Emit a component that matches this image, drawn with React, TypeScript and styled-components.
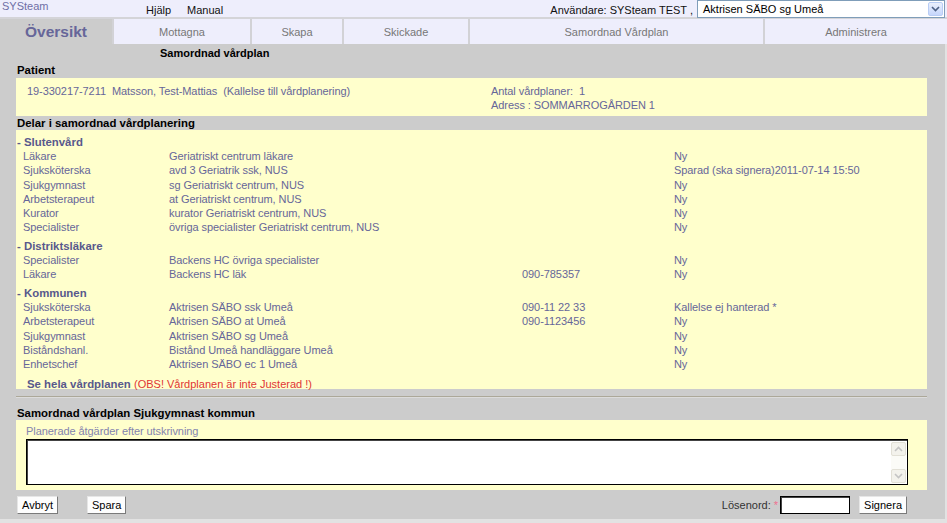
import React from 'react';
import styled, { createGlobalStyle } from 'styled-components';

// Layout colours
// Lavender (#EEEEFC) - top bar and tabs
// Silver (#CCCCCC) - page body
// Cream (#FFFFCC) - boxes
// Slate (#666699) - body text

const GlobalStyle = createGlobalStyle`
  body {
    margin: 0;
    background: #e2e2e2;
    font-family: "Liberation Sans", Arial, sans-serif;
    font-size: 11px;
  }
`;

const TopBar = styled.header`
  display: flex;
  align-items: center;
  height: 17px;
  background: #eeeefc;
  border-bottom: 2px solid #d4d4d8;
`;

const Brand = styled.div`
  align-self: flex-start;
  width: 144px;
  padding-left: 2px;
  line-height: 13px;
  color: #6f6fa6;
  font-size: 11px;
`;

const MenuLink = styled.span`
  color: #111;
  margin-right: 16px;
  padding-top: 2px;
`;

const Spacer = styled.div`
  flex: 1;
`;

const UserLabel = styled.span`
  color: #111;
  margin-right: 4px;
  padding-top: 2px;
`;

const Select = styled.div`
  display: flex;
  align-items: center;
  box-sizing: border-box;
  width: 248px;
  height: 18px;
  margin-top: 1px;
  margin-right: 2px;
  background: #fff;
  border: 1px solid #7f9db9;
  font-size: 11px;
  color: #000;
`;

const SelectText = styled.span`
  flex: 1;
  padding-left: 5px;
`;

const SelectButton = styled.span`
  display: flex;
  align-items: center;
  justify-content: center;
  width: 15px;
  height: 14px;
  margin-right: 1px;
  border: 1px solid #b9cdf5;
  border-radius: 2px;
  box-sizing: border-box;
  background: linear-gradient(#eaf0fd, #c6d6fb);
`;

const TabRow = styled.nav`
  display: flex;
  height: 25px;
  gap: 2px;
  background: #d2d2d6;
`;

const Tab = styled.div<{ $w?: number; $active?: boolean }>`
  display: flex;
  align-items: center;
  justify-content: center;
  ${(p) => (p.$w ? `width: ${p.$w}px;` : 'flex: 1;')}
  background: ${(p) => (p.$active ? '#cccccc' : '#eeeefc')};
  color: ${(p) => (p.$active ? '#666699' : '#777')};
  font-size: ${(p) => (p.$active ? '15.5px' : '11px')};
  font-weight: ${(p) => (p.$active ? 'bold' : 'normal')};
`;

const Main = styled.main`
  width: 945px;
  box-sizing: border-box;
  background: #cccccc;
  padding: 0 18px 5px 16px;
`;

const SubTitle = styled.div`
  padding-left: 144px;
  line-height: 18px;
  font-weight: bold;
  color: #000;
`;

const Label = styled.div<{ $h: number; $mt?: number }>`
  line-height: ${(p) => p.$h}px;
  margin-top: ${(p) => p.$mt ?? 0}px;
  padding-left: 1px;
  font-weight: bold;
  font-size: 11.4px;
  color: #000;
`;

const YellowBox = styled.section`
  background: #ffffcc;
  color: #666699;
  letter-spacing: -0.07px;
`;

const PatientBox = styled(YellowBox)`
  display: grid;
  grid-template-columns: 464px 1fr;
  height: 38px;
  box-sizing: border-box;
  padding: 6px 11px 0;
  line-height: 14px;
  white-space: pre;
`;

const PartBox = styled(YellowBox)`
  padding: 5px 0 0 1px;
  height: 259px;
  box-sizing: border-box;
`;

const GroupHeader = styled.div`
  line-height: 14.2px;
  margin-top: 4.5px;
  font-weight: bold;
  font-size: 11.4px;
  letter-spacing: 0;
  color: #58588c;
  &:first-child {
    margin-top: 0;
  }
`;

const Row = styled.div`
  display: grid;
  grid-template-columns: 146px 353px 152px 1fr;
  padding-left: 6px;
  line-height: 14.2px;
`;

const SeeAll = styled.div`
  margin-top: 6.5px;
  padding-left: 10px;
  line-height: 12px;
  font-weight: bold;
  font-size: 11.4px;
  letter-spacing: 0;
  color: #58588c;
`;

const Warning = styled.span`
  font-weight: normal;
  font-size: 11px;
  color: #e03535;
`;

const Rule = styled.hr`
  margin: 7px 0 0;
  border: none;
  border-top: 1px solid #aca899;
  border-bottom: 1px solid #dcdcdc;
`;

const PlanBox = styled(YellowBox)`
  padding: 4px 19px 5px 10px;
`;

const PlanLabel = styled.div`
  line-height: 14px;
  color: #8484ae;
`;

const TextArea = styled.div`
  display: flex;
  height: 46px;
  margin-top: 1px;
  box-sizing: border-box;
  background: #fff;
  border: 1px solid #000;
  box-shadow: inset 1px 1px 0 #444;
  padding: 2px 1px 1px 0;
`;

const TextAreaField = styled.div`
  flex: 1;
`;

const ScrollTrack = styled.div`
  display: flex;
  flex-direction: column;
  justify-content: space-between;
  width: 15px;
  background: #fbfbf7;
`;

const ScrollButton = styled.div`
  display: flex;
  align-items: center;
  justify-content: center;
  height: 14px;
  box-sizing: border-box;
  border: 1px solid #e2e0d6;
  border-radius: 2px;
  background: #f3f2ec;
`;

const ActionBar = styled.div`
  display: flex;
  align-items: center;
  height: 18px;
  margin-top: 6px;
  padding: 0 20px 0 1px;
`;

const Button = styled.button<{ $ml?: number }>`
  height: 18px;
  margin-left: ${(p) => p.$ml ?? 0}px;
  padding: 0 4px;
  box-sizing: border-box;
  background: #fdfdfd;
  border: 1px solid;
  border-color: #e6e6e6 #7a7a7a #7a7a7a #e6e6e6;
  font-family: "Liberation Sans", Arial, sans-serif;
  font-size: 11px;
  color: #000;
`;

const PasswordLabel = styled.span`
  color: #333;
`;

const Star = styled.span`
  color: #f07090;
  margin: 0 2px 0 3px;
`;

const PasswordInput = styled.div`
  width: 70px;
  height: 18px;
  box-sizing: border-box;
  background: #fff;
  border: 1px solid #000;
  box-shadow: inset 1px 1px 0 #444;
`;

const Chevron = ({ up, color }: { up?: boolean; color: string }) => (
  <svg width="9" height="6" viewBox="0 0 9 6">
    <path
      d={up ? 'M1 5 L4.5 1.5 L8 5' : 'M1 1 L4.5 4.5 L8 1'}
      fill="none"
      stroke={color}
      strokeWidth="1.6"
    />
  </svg>
);

type Part = { role: string; unit: string; phone?: string; status: string };

const groups: { name: string; parts: Part[] }[] = [
  {
    name: 'Slutenvård',
    parts: [
      { role: 'Läkare', unit: 'Geriatriskt centrum läkare', status: 'Ny' },
      { role: 'Sjuksköterska', unit: 'avd 3 Geriatrik ssk, NUS', status: 'Sparad (ska signera)2011-07-14 15:50' },
      { role: 'Sjukgymnast', unit: 'sg Geriatriskt centrum, NUS', status: 'Ny' },
      { role: 'Arbetsterapeut', unit: 'at Geriatriskt centrum, NUS', status: 'Ny' },
      { role: 'Kurator', unit: 'kurator Geriatriskt centrum, NUS', status: 'Ny' },
      { role: 'Specialister', unit: 'övriga specialister Geriatriskt centrum, NUS', status: 'Ny' },
    ],
  },
  {
    name: 'Distriktsläkare',
    parts: [
      { role: 'Specialister', unit: 'Backens HC övriga specialister', status: 'Ny' },
      { role: 'Läkare', unit: 'Backens HC läk', phone: '090-785357', status: 'Ny' },
    ],
  },
  {
    name: 'Kommunen',
    parts: [
      { role: 'Sjuksköterska', unit: 'Aktrisen SÄBO ssk Umeå', phone: '090-11 22 33', status: 'Kallelse ej hanterad *' },
      { role: 'Arbetsterapeut', unit: 'Aktrisen SÄBO at Umeå', phone: '090-1123456', status: 'Ny' },
      { role: 'Sjukgymnast', unit: 'Aktrisen SÄBO sg Umeå', status: 'Ny' },
      { role: 'Biståndshanl.', unit: 'Bistånd Umeå handläggare Umeå', status: 'Ny' },
      { role: 'Enhetschef', unit: 'Aktrisen SÄBO ec 1 Umeå', status: 'Ny' },
    ],
  },
];

const tabs = [
  { label: 'Mottagna', w: 136 },
  { label: 'Skapa', w: 90 },
  { label: 'Skickade', w: 124 },
  { label: 'Samordnad Vårdplan', w: 293 },
  { label: 'Administrera' },
];

const App = () => {
  return (
    <>
      <GlobalStyle />
      <TopBar>
        <Brand>SYSteam</Brand>
        <MenuLink>Hjälp</MenuLink>
        <MenuLink>Manual</MenuLink>
        <Spacer />
        <UserLabel>Användare: SYSteam TEST ,</UserLabel>
        <Select>
          <SelectText>Aktrisen SÄBO sg Umeå</SelectText>
          <SelectButton>
            <Chevron color="#4d6185" />
          </SelectButton>
        </Select>
      </TopBar>
      <TabRow>
        <Tab $w={112} $active>Översikt</Tab>
        {tabs.map((t) => (
          <Tab key={t.label} $w={t.w}>{t.label}</Tab>
        ))}
      </TabRow>
      <Main>
        <SubTitle>Samordnad vårdplan</SubTitle>
        <Label $h={16}>Patient</Label>
        <PatientBox>
          <div>19-330217-7211  Matsson, Test-Mattias  (Kallelse till vårdplanering)</div>
          <div>
            <div>Antal vårdplaner:  1</div>
            <div>Adress : SOMMARROGÅRDEN 1</div>
          </div>
        </PatientBox>
        <Label $h={14}>Delar i samordnad vårdplanering</Label>
        <PartBox>
          {groups.map((g) => (
            <React.Fragment key={g.name}>
              <GroupHeader>- {g.name}</GroupHeader>
              {g.parts.map((p, i) => (
                <Row key={i}>
                  <span>{p.role}</span>
                  <span>{p.unit}</span>
                  <span>{p.phone ?? ''}</span>
                  <span>{p.status}</span>
                </Row>
              ))}
            </React.Fragment>
          ))}
          <SeeAll>
            Se hela vårdplanen <Warning>(OBS! Vårdplanen är inte Justerad !)</Warning>
          </SeeAll>
        </PartBox>
        <Rule />
        <Label $h={14} $mt={8}>Samordnad vårdplan Sjukgymnast kommun</Label>
        <PlanBox>
          <PlanLabel>Planerade åtgärder efter utskrivning</PlanLabel>
          <TextArea>
            <TextAreaField />
            <ScrollTrack>
              <ScrollButton>
                <Chevron up color="#c4c4c4" />
              </ScrollButton>
              <ScrollButton>
                <Chevron color="#c4c4c4" />
              </ScrollButton>
            </ScrollTrack>
          </TextArea>
        </PlanBox>
        <ActionBar>
          <Button>Avbryt</Button>
          <Button $ml={29}>Spara</Button>
          <Spacer />
          <PasswordLabel>Lösenord:</PasswordLabel>
          <Star>*</Star>
          <PasswordInput />
          <Button $ml={9}>Signera</Button>
        </ActionBar>
      </Main>
    </>
  );
};

export default App;
